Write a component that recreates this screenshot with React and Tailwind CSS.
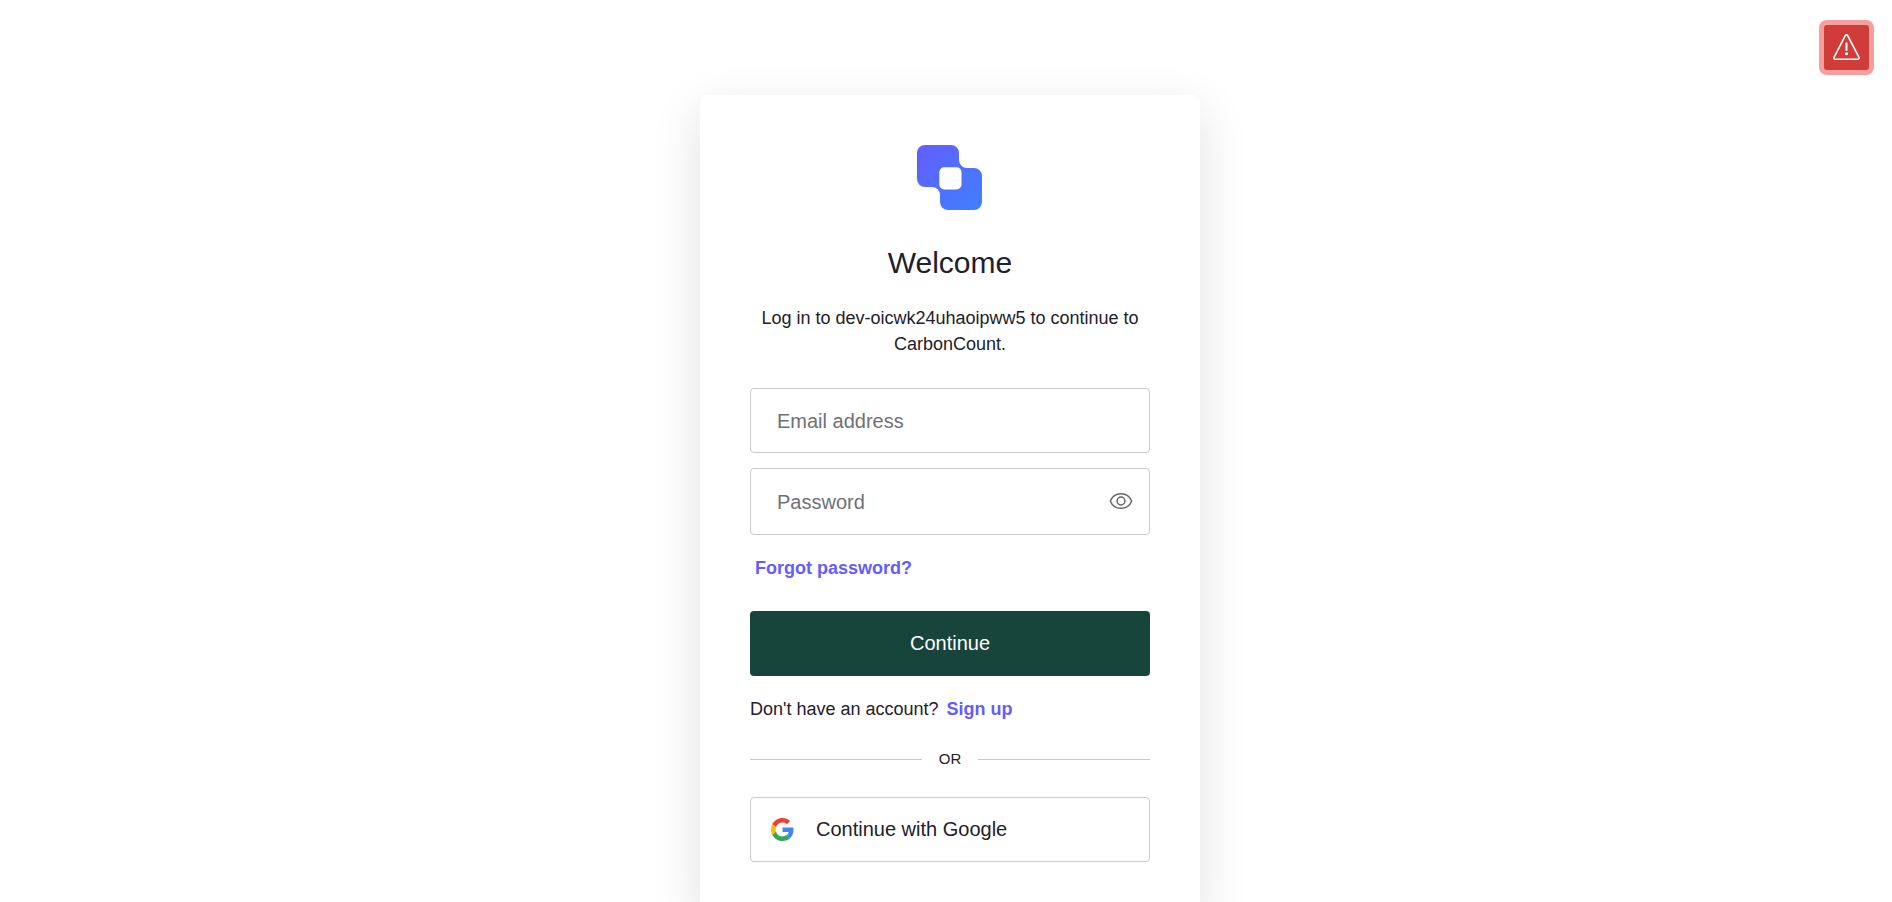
import { useState } from "react";

function Logo() {
  return (
    <svg viewBox="0 0 66 66" className="-mb-px size-[66px]" role="img" aria-label="Company logo">
      <defs>
        <linearGradient id="logo-fill" x1="0" y1="0" x2="1" y2="1">
          <stop offset="0" stopColor="#635dff" />
          <stop offset="1" stopColor="#3f80ff" />
        </linearGradient>
      </defs>
      <path
        fill="url(#logo-fill)"
        d="M8 0H34A8 8 0 0 1 42 8V15A8 8 0 0 0 50 23H57A8 8 0 0 1 65 31V57A8 8 0 0 1 57 65H31A8 8 0 0 1 23 57V50A8 8 0 0 0 15 42H8A8 8 0 0 1 0 34V8A8 8 0 0 1 8 0Z"
      />
      <rect x="22.3" y="22.3" width="22.2" height="22.2" rx="5" fill="#fff" />
    </svg>
  );
}

function WarningIcon() {
  return (
    <svg
      viewBox="0 0 27 27"
      className="size-[27px]"
      fill="none"
      stroke="currentColor"
      strokeWidth="1.6"
      strokeLinejoin="round"
      aria-hidden="true"
    >
      <path d="M12.3 1.6a1.35 1.35 0 0 1 2.4 0L26 23.3a1.3 1.3 0 0 1-1.2 1.9H2.2A1.3 1.3 0 0 1 1 23.3Z" />
      <path d="M13.5 8.6V16.8" strokeWidth="2" />
      <circle cx="13.5" cy="19.8" r="1.5" fill="currentColor" stroke="none" />
    </svg>
  );
}

function EyeIcon() {
  return (
    <svg
      viewBox="0 0 24 18"
      className="h-[18px] w-6"
      fill="none"
      stroke="currentColor"
      strokeWidth="1.5"
      strokeLinejoin="round"
      aria-hidden="true"
    >
      <path d="M1.3 9C3.2 4.2 7.4 1.7 12 1.7S20.8 4.2 22.7 9C20.8 13.8 16.6 16.3 12 16.3S3.2 13.8 1.3 9Z" />
      <circle cx="12" cy="9" r="3.9" />
    </svg>
  );
}

function GoogleIcon() {
  return (
    <svg viewBox="0 0 48 48" className="size-[23px]" aria-hidden="true">
      <path fill="#EA4335" d="M24 9.5c3.54 0 6.71 1.22 9.21 3.6l6.85-6.85C35.9 2.38 30.47 0 24 0 14.62 0 6.51 5.38 2.56 13.22l7.98 6.19C12.43 13.72 17.74 9.5 24 9.5z" />
      <path fill="#4285F4" d="M46.98 24.55c0-1.57-.15-3.09-.38-4.55H24v9.02h12.94c-.58 2.96-2.26 5.48-4.78 7.18l7.73 6c4.51-4.18 7.09-10.36 7.09-17.65z" />
      <path fill="#FBBC05" d="M10.53 28.59c-.48-1.45-.76-2.99-.76-4.59s.27-3.14.76-4.59l-7.98-6.19C.92 16.46 0 20.12 0 24c0 3.88.92 7.54 2.56 10.78l7.97-6.19z" />
      <path fill="#34A853" d="M24 48c6.48 0 11.93-2.13 15.89-5.81l-7.73-6c-2.15 1.45-4.92 2.3-8.16 2.3-6.26 0-11.57-4.22-13.47-9.91l-7.98 6.19C6.51 42.62 14.62 48 24 48z" />
    </svg>
  );
}

/* Text box whose label rests inside it and moves onto the border once the box is in use. */
function Field({ id, type, label, className, children }) {
  return (
    <div className={`relative flex items-center rounded border border-[#c9cace] focus-within:border-[#635dff] ${className}`}>
      <input
        id={id}
        type={type}
        placeholder=" "
        className="peer h-full min-w-0 flex-1 pl-[26px] text-xl outline-none"
      />
      <label
        htmlFor={id}
        className="pointer-events-none absolute -top-3 left-[26px] bg-white text-base text-[#6f7078] peer-placeholder-shown:inset-y-0 peer-placeholder-shown:flex peer-placeholder-shown:items-center peer-placeholder-shown:bg-transparent peer-placeholder-shown:text-xl"
      >
        {label}
      </label>
      {children}
    </div>
  );
}

export default function App() {
  const [visible, setVisible] = useState(false);

  return (
    <main className="flex min-h-screen justify-center bg-white pt-[95px] pl-2 font-['Liberation_Sans',Arial,sans-serif] text-[#1e212a]">
      <button
        type="button"
        aria-label="Warning"
        className="fixed top-[25px] right-[23px] flex size-[45px] items-center justify-center rounded-[3px] bg-[#d03c38] text-white ring-5 ring-[#f5a09d]"
      >
        <WarningIcon />
      </button>

      <section className="w-full max-w-[500px] rounded-md bg-white p-[50px] shadow-[0_15px_50px_rgba(0,0,0,0.12)]">
        <header className="flex flex-col items-center text-center">
          <Logo />
          <h1 className="mt-[35px] text-3xl leading-9">Welcome</h1>
          <p className="mt-6 text-lg leading-[26px]">Log in to dev-oicwk24uhaoipww5 to continue to CarbonCount.</p>
        </header>

        <form className="mt-[31px]" onSubmit={(event) => event.preventDefault()}>
          <Field id="email" type="email" label="Email address" className="h-[65px]" />
          <Field
            id="password"
            type={visible ? "text" : "password"}
            label="Password"
            className="mt-[15px] h-[67px]"
          >
            <button
              type="button"
              aria-label="Show password"
              onClick={() => setVisible(!visible)}
              className="mr-4 pb-0.5 text-[#65676e]"
            >
              <EyeIcon />
            </button>
          </Field>

          <a href="#forgot" className="mt-5 ml-[5px] block w-fit text-lg leading-[26px] font-bold text-[#635dff]">
            Forgot password?
          </a>

          <button type="submit" className="mt-[30px] block h-[65px] w-full rounded bg-[#18453b] pb-0.5 text-xl text-white">
            Continue
          </button>
        </form>

        <p className="mt-5 flex gap-2 text-lg leading-[26px]">
          Don't have an account?
          <a href="#signup" className="font-bold text-[#635dff]">Sign up</a>
        </p>

        <div className="mt-7 flex items-center gap-[17px] text-[15px] leading-[18px]">
          <span className="h-px flex-1 bg-[#c9cace]" />
          OR
          <span className="h-px flex-1 bg-[#c9cace]" />
        </div>

        <button
          type="button"
          className="mt-[29px] flex h-[65px] w-full items-center gap-[22px] rounded border border-[#c9cace] px-5 text-xl"
        >
          <GoogleIcon />
          <span className="pb-0.5">Continue with Google</span>
        </button>
      </section>
    </main>
  );
}
